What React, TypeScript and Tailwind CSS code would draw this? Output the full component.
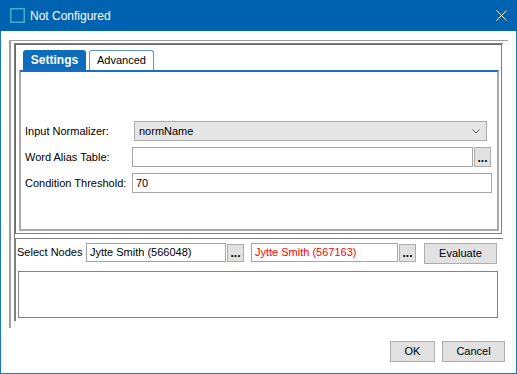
import { type ReactNode } from "react";

const inputCls = "h-[19px] border border-[#a5a5a5] bg-white pl-[3px] flex items-center";
const btnCls = "flex items-center justify-center border border-[#adadad] bg-[#e1e1e1]";

export default function App() {
  return (
    <div className="flex h-[374px] w-[517px] flex-col bg-white font-['Liberation_Sans',Arial,sans-serif] text-[11px] text-black">
      <TitleBar />
      <div className="flex flex-1 flex-col border-x border-b border-[#1a78c8] pl-[8px] pt-[9px] pb-[11px]">
        <div className="h-[288px] w-[499px] border-l-2 border-t border-[#a0a0a0] pl-[3px] pt-[2px] pb-[7px]">
          <div className="flex h-full w-[489px] flex-col border-l border-t border-[#7f7f7f]">
            <SettingsGroup />
            <NodesGroup />
          </div>
        </div>
        <div className="mt-[13px] flex justify-end gap-[7px] pr-[11px]">
          <button className={`${btnCls} h-[21px] w-[45px]`}>OK</button>
          <button className={`${btnCls} h-[21px] w-[63px]`}>Cancel</button>
        </div>
      </div>
    </div>
  );
}

function TitleBar() {
  return (
    <div className="flex h-[31px] shrink-0 items-center bg-[#0063b1] pl-[10px] pr-[10px] text-white">
      <svg width="15" height="15" viewBox="0 0 15 15">
        <rect x="0.75" y="0.75" width="13.5" height="13.5" fill="none" stroke="#3cb1cd" strokeWidth="1.5" />
      </svg>
      <span className="ml-[5px] text-[12px]">Not Configured</span>
      <svg className="ml-auto" width="11" height="11" viewBox="0 0 11 11">
        <path d="M0.5 0.5 L10.5 10.5 M10.5 0.5 L0.5 10.5" stroke="white" strokeWidth="1" />
      </svg>
    </div>
  );
}

function SettingsGroup() {
  return (
    <div className="flex h-[190px] w-[487px] flex-col border border-[#7f7f7f] border-l-[#696969] border-t-[#696969] pl-[3px] pt-[5px] pr-[2px] pb-[2px]">
      <div className="flex h-[20px] gap-[3px] pl-[4px]">
        <div className="flex w-[63px] items-center justify-center rounded-t-[3px] bg-[#0f6cbd] text-[12px] font-bold text-white">
          Settings
        </div>
        <div className="flex w-[65px] items-center justify-center rounded-t-[3px] border border-b-0 border-[#5a96cc] bg-white">
          Advanced
        </div>
      </div>
      <div className="h-[161px] w-[480px] border-2 border-[#a9a9a9] border-t-[#1b6ec2] pl-[4px] pt-[49px] pr-[5px]">
        <div className="grid grid-cols-[107px_360px] gap-y-[6px]">
          <Label>Input Normalizer:</Label>
          <div className="ml-[2px] mr-[5px] flex h-[20px] items-center border border-[#adadad] bg-[#e5e5e5] pl-[4px] pr-[6px]">
            <span>normName</span>
            <svg className="ml-auto" width="8" height="5" viewBox="0 0 8 5">
              <path d="M0.5 0.5 L4 4 L7.5 0.5" fill="none" stroke="#555" strokeWidth="1" />
            </svg>
          </div>
          <Label>Word Alias Table:</Label>
          <div className="flex h-[20px]">
            <div className={`${inputCls} h-[20px] w-[341px]`} />
            <Dots className="ml-[1px] h-[20px]" />
          </div>
          <Label>Condition Threshold:</Label>
          <div className={`${inputCls} h-[20px]`}>70</div>
        </div>
      </div>
    </div>
  );
}

function NodesGroup() {
  return (
    <div className="mt-[4px] h-[83px] w-[488px] border-l border-t border-[#7f7f7f] pt-[4px] pb-[3px]">
      <div className="flex items-start pl-[1px]">
        <span className="flex h-[19px] w-[69px] items-center">Select Nodes</span>
        <div className={`${inputCls} w-[140px]`}>Jytte Smith (566048)</div>
        <Dots className="ml-[1px] mt-[1px] h-[18px]" />
        <div className={`${inputCls} ml-[7px] w-[147px] text-[#ff0000]`}>Jytte Smith (567163)</div>
        <Dots className="ml-[1px] mt-[1px] h-[18px]" />
        <button className={`${btnCls} ml-[8px] h-[21px] w-[73px]`}>Evaluate</button>
      </div>
      <div className="ml-[2px] mt-[7px] h-[47px] w-[480px] border border-[#828282] bg-white" />
    </div>
  );
}

function Label({ children }: { children: ReactNode }) {
  return <span className="flex h-[20px] items-center">{children}</span>;
}

function Dots({ className }: { className: string }) {
  return (
    <div className={`flex w-[17px] items-end justify-center border border-[#adadad] bg-[#e1e1e1] pb-[2px] text-[12px] font-bold leading-none ${className}`}>
      ...
    </div>
  );
}
